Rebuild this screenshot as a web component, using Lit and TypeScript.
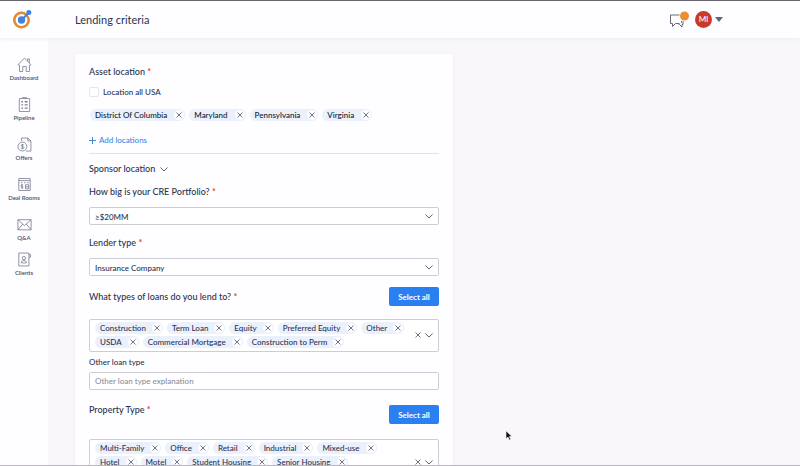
import { LitElement, html, svg, css } from "lit";
import { customElement, property } from "lit/decorators.js";

const cross = html`<svg class="cross" viewBox="0 0 6 6" aria-hidden="true">
  <path d="M.8.8 5.2 5.2M5.2.8.8 5.2" fill="none" stroke="currentColor" stroke-width=".8" stroke-linecap="round" />
</svg>`;

const chevron = html`<svg class="chevron" viewBox="0 0 8 5" aria-hidden="true">
  <path d="M.7.8 4 4 7.3.8" fill="none" stroke="currentColor" stroke-width=".9" stroke-linecap="round" stroke-linejoin="round" />
</svg>`;

const shared = css`
  * {
    box-sizing: border-box;
  }
  button,
  input,
  select {
    font: inherit;
    color: inherit;
    margin: 0;
    padding: 0;
    border: 0;
    background: none;
  }
  button {
    cursor: pointer;
  }
  svg {
    display: block;
    flex: none;
  }
  .cross {
    width: 6px;
    height: 6px;
    color: #4c5161;
  }
  .chevron {
    width: 8px;
    height: 5px;
    color: #4c5161;
  }
`;

@customElement("chip-list")
class ChipList extends LitElement {
  @property({ type: Array }) items: string[] = [];
  @property({ type: Boolean, reflect: true }) strong = false;

  static styles = [
    shared,
    css`
      :host {
        display: block;
      }
      .list {
        display: flex;
        flex-wrap: wrap;
        gap: 2px 4px;
        margin: 0;
        padding: 0;
        list-style: none;
      }
      .chip {
        display: flex;
        align-items: center;
        gap: 5px;
        height: 12px;
        padding-left: 5px;
        border-radius: 6px;
        background: #eaf1fc;
        color: #2a3350;
        font-size: 8px;
        line-height: 12px;
        font-weight: 500;
        white-space: nowrap;
      }
      :host([strong]) .chip {
        gap: 6px;
        color: #12182c;
      }
      .remove {
        display: grid;
        place-items: center;
        width: 12px;
        height: 12px;
        border: 1px solid #eaf1fc;
        border-radius: 6px;
        background: #fdfdff;
      }
    `,
  ];

  render() {
    return html`<ul class="list">
      ${this.items.map(
        (item) => html`<li class="chip">
          <span>${item}</span>
          <button class="remove" type="button" aria-label="Remove ${item}">${cross}</button>
        </li>`
      )}
    </ul>`;
  }
}

const navItems = [
  {
    label: "Dashboard",
    icon: svg`<path d="M1 7.2 7 1l6 6.2v.6h-1.2V14H8.7V9.2H5.3V14H2.2V7.8H1zM10 4V1.8h1.7v4" />`,
  },
  {
    label: "Pipeline",
    icon: svg`<path d="M2 1.5h10V14H2zM5 1.5V.6h4v.9" /><path d="M4 4.6h1.600M4 7.6h1.600M4 10.8h1.600M7.200 4.6h2.800M7.200 7.6h2.800M7.200 10.8h2.800" stroke-width="1.300" />`,
  },
  {
    label: "Offers",
    icon: svg`<path d="M4.2 4V1h6l3 2.8V13.6H8.5M10.2 1v2.8h3" /><circle cx="5" cy="9.2" r="4.3" /><path d="M6.4 7.8C5.6 7 3.8 7.1 3.8 8.3s2.6.6 2.6 1.9-2 1.3-2.8.4M5 6.6v5.2" />`,
  },
  {
    label: "Deal Rooms",
    icon: svg`<path d="M1.5 1.5h11v11.5h-11zM1.5 3.5h11M3.5 5.5h1.5M6.5 5.5H8M9.5 5.5h1.5M5.6 7.8C5 7.2 3.6 7.3 3.6 8.3s2 .5 2 1.500-1.500 1-2.100.4M4.6 6.8v4.500M8 7.500h3v4H8zM8 9.500h3" />`,
  },
  {
    label: "Q&A",
    icon: svg`<path d="M.6 2.600h12.800v9.800H.6zM.6 2.600 7 8.300l6.400-5.700M.6 12.400l4.700-5.600M13.400 12.400 8.700 6.800" />`,
  },
  {
    label: "Clients",
    icon: svg`<path d="M1.500 1h9.800v12.500H1.500zM11.300 2.500h1.500v2.500h-1.500M4 10.500c0-1.500.8-2.300 2.400-2.300s2.400.8 2.400 2.300z" /><circle cx="6.400" cy="5.800" r="1.600" />`,
  },
];

@customElement("app-root")
class AppRoot extends LitElement {
  static styles = [
    shared,
    css`
      :host {
        position: relative;
        display: flex;
        flex-direction: column;
        height: 100vh;
        overflow: hidden;
        border-top: 1px solid #6a666d;
        border-bottom: 1px solid #b9b7bb;
        box-sizing: border-box;
        background: #f9f7fa;
        color: #2a3350;
        font-family: Lato, "Open Sans", sans-serif;
        font-size: 9px;
        line-height: 18px;
      }
      .header {
        z-index: 1;
        display: flex;
        align-items: center;
        height: 37px;
        flex: none;
        background: #fefdff;
        box-shadow: 0 1px 4px #efecf1;
      }
      .brand {
        width: 48px;
        margin-right: 27px;
        padding: 0 0 2px 13px;
      }
      .logo {
        width: 20px;
        height: 20px;
      }
      .title {
        flex: 1;
        margin: 0;
        font-size: 11px;
        font-weight: 400;
      }
      .account {
        display: flex;
        align-items: center;
        gap: 6px;
        margin-right: 77px;
      }
      .messages {
        width: 20px;
        height: 18px;
      }
      .profile {
        display: flex;
        align-items: center;
        gap: 3px;
      }
      .avatar {
        width: 17px;
        height: 17px;
        border-radius: 50%;
        background: #c93a2b;
        color: #fff;
        font-size: 8px;
        font-weight: 500;
        line-height: 17px;
        text-align: center;
      }
      .caret {
        width: 8px;
        height: 5px;
      }
      .body {
        display: flex;
        flex: 1;
        min-height: 0;
      }
      .nav {
        display: flex;
        flex-direction: column;
        gap: 14px;
        width: 48px;
        flex: none;
        padding-top: 19px;
        background: #fefdff;
      }
      .item {
        display: flex;
        flex-direction: column;
        align-items: center;
        gap: 1px;
        color: #4a516b;
        font-size: 6px;
        font-weight: 600;
        line-height: 10px;
        text-decoration: none;
        white-space: nowrap;
      }
      .item:last-child {
        margin-top: -5px;
      }
      .glyph {
        width: 15px;
        height: 15px;
        fill: none;
        stroke: #7b8092;
        stroke-width: 0.8;
      }
      .main {
        flex: 1;
        min-width: 0;
        padding: 16px 27px;
        overflow: hidden auto;
        scrollbar-width: none;
      }
      .card {
        display: flex;
        flex-direction: column;
        max-width: 378px;
        padding: 9px 14px 14px;
        border-radius: 3px;
        background: #fefdff;
        box-shadow: 0 0 5px #f1eef4;
      }
      .label {
        margin: 0;
        font-size: 9px;
        font-weight: 500;
      }
      .required {
        color: #e2483d;
        font-weight: 700;
      }
      .check {
        display: flex;
        align-items: center;
        gap: 4px;
        margin-top: 2px;
        font-size: 8px;
        font-weight: 500;
      }
      .box {
        appearance: none;
        width: 10px;
        height: 10px;
        border: 1px solid #e6e5ec;
        border-radius: 2px;
        background: #fff;
      }
      .locations {
        margin: 8px 1px 0;
      }
      .add {
        display: flex;
        align-items: center;
        gap: 3px;
        align-self: flex-start;
        margin-top: 10px;
        color: #3a8ae6;
        font-size: 8px;
        font-weight: 500;
      }
      .plus {
        width: 7px;
        height: 7px;
      }
      .rule {
        width: 100%;
        height: 1px;
        margin: 4px 0 6px;
        border: 0;
        background: #e3e2e8;
      }
      .sponsor {
        display: flex;
        align-items: center;
        gap: 5px;
        align-self: flex-start;
        margin-bottom: 5px;
        font-weight: 500;
      }
      .select {
        display: grid;
        align-items: center;
        margin: 6px 0 9px;
      }
      .select > * {
        grid-area: 1 / 1;
      }
      .select .chevron {
        justify-self: end;
        margin-right: 6px;
        pointer-events: none;
      }
      .field {
        width: 100%;
        height: 18px;
        padding: 0 5px;
        border: 1px solid #cdcdd5;
        border-radius: 2px;
        background: #fff;
        appearance: none;
        font-size: 8px;
        font-weight: 500;
      }
      .field::placeholder {
        color: #8b8e9b;
        opacity: 1;
      }
      .row {
        display: flex;
        align-items: center;
        justify-content: space-between;
        margin: 2px 0 13px;
      }
      .row.low {
        align-items: flex-end;
        height: 23px;
        margin: 11px 0 15px;
      }
      .row.low .label {
        align-self: flex-start;
      }
      .all {
        width: 50px;
        height: 19px;
        border-radius: 2px;
        background: #2a80f0;
        color: #fff;
        font-size: 8px;
        font-weight: 700;
      }
      .multi {
        display: flex;
        align-items: center;
        gap: 4px;
        padding: 2px 5px 3px;
        border: 1px solid #cdcdd5;
        border-radius: 2px;
        background: #fff;
      }
      .multi.tall {
        min-height: 47px;
      }
      .chips {
        flex: 1;
        align-self: flex-start;
      }
      .small {
        margin: 1px 0;
        font-size: 8px;
        font-weight: 500;
      }
      .pointer {
        position: absolute;
        left: 505px;
        top: 429px;
        width: 8px;
        height: 11px;
      }
    `,
  ];

  select(id: string, label: string, value: string) {
    return html`<label class="label" for=${id}>${label} <span class="required">*</span></label>
      <div class="select">
        <select class="field" id=${id}>
          <option>${value}</option>
        </select>
        ${chevron}
      </div>`;
  }

  multi(label: string, items: string[], tall = false) {
    return html`<div class="row ${tall ? "low" : ""}">
        <h2 class="label">${label} <span class="required">*</span></h2>
        <button class="all" type="button">Select all</button>
      </div>
      <div class="multi ${tall ? "tall" : ""}">
        <chip-list class="chips" .items=${items}></chip-list>
        <button type="button" aria-label="Clear ${label}">${cross}</button>
        <button type="button" aria-label="Open ${label}">${chevron}</button>
      </div>`;
  }

  render() {
    return html`
      <header class="header">
        <a class="brand" href="#" aria-label="Home">
          <svg class="logo" viewBox="0 0 20 20">
            <circle cx="8.500" cy="11" r="7.200" fill="none" stroke="#e8892f" stroke-width="2.600" />
            <path d="M12 1.500 18 8" stroke="#fefdff" stroke-width="2.500" />
            <path d="M8.500 11 16 3.500" stroke="#3f83dc" stroke-width="2" />
            <circle cx="8.500" cy="11" r="3.700" fill="#3f83dc" />
            <circle cx="15.800" cy="3.500" r="2.500" fill="#3f83dc" />
          </svg>
        </a>
        <h1 class="title">Lending criteria</h1>
        <div class="account">
          <button type="button" aria-label="Messages">
            <svg class="messages" viewBox="0 0 20 18">
              <path d="M10.500 4H1.500v8.500H3.500v3l3-3h4" fill="none" stroke="#555b6c" stroke-width=".9" />
              <path d="M14 10v3.500h-1v2.500l-2.500-2.500H9.500M12.500 10v1.500" fill="none" stroke="#555b6c" stroke-width=".9" />
              <circle cx="15.500" cy="5" r="4.500" fill="#eb8f35" />
            </svg>
          </button>
          <button class="profile" type="button" aria-label="Account MI">
            <span class="avatar">MI</span>
            <svg class="caret" viewBox="0 0 8 5"><path d="M0 0h8L4 5z" fill="#59648a" /></svg>
          </button>
        </div>
      </header>
      <div class="body">
        <nav class="nav">
          ${navItems.map(
            (item) => html`<a class="item" href="#">
              <svg class="glyph" viewBox="0 0 14 14.500" aria-hidden="true">${item.icon}</svg>
              ${item.label}
            </a>`
          )}
        </nav>
        <main class="main">
          <form class="card">
            <h2 class="label">Asset location <span class="required">*</span></h2>
            <label class="check"><input class="box" type="checkbox" />Location all USA</label>
            <chip-list
              class="locations"
              strong
              .items=${["District Of Columbia", "Maryland", "Pennsylvania", "Virginia"]}
            ></chip-list>
            <button class="add" type="button">
              <svg class="plus" viewBox="0 0 7 7"><path d="M3.500 0v7M0 3.500h7" stroke="currentColor" /></svg>
              Add locations
            </button>
            <hr class="rule" />
            <button class="sponsor" type="button">Sponsor location ${chevron}</button>
            ${this.select("portfolio", "How big is your CRE Portfolio?", "≥$20MM")}
            ${this.select("lender", "Lender type", "Insurance Company")}
            ${this.multi("What types of loans do you lend to?", [
              "Construction",
              "Term Loan",
              "Equity",
              "Preferred Equity",
              "Other",
              "USDA",
              "Commercial Mortgage",
              "Construction to Perm",
            ])}
            <label class="small" for="other">Other loan type</label>
            <input class="field" id="other" placeholder="Other loan type explanation" />
            ${this.multi(
              "Property Type",
              [
                "Multi-Family",
                "Office",
                "Retail",
                "Industrial",
                "Mixed-use",
                "Hotel",
                "Motel",
                "Student Housing",
                "Senior Housing",
              ],
              true
            )}
          </form>
        </main>
      </div>
      <svg class="pointer" viewBox="0 0 8 11" aria-hidden="true">
        <path d="M1 .8v8l2-1.700 1.300 3 1.400-.6-1.300-2.900H7z" fill="#111" stroke="#fff" stroke-width=".6" />
      </svg>
    `;
  }
}
